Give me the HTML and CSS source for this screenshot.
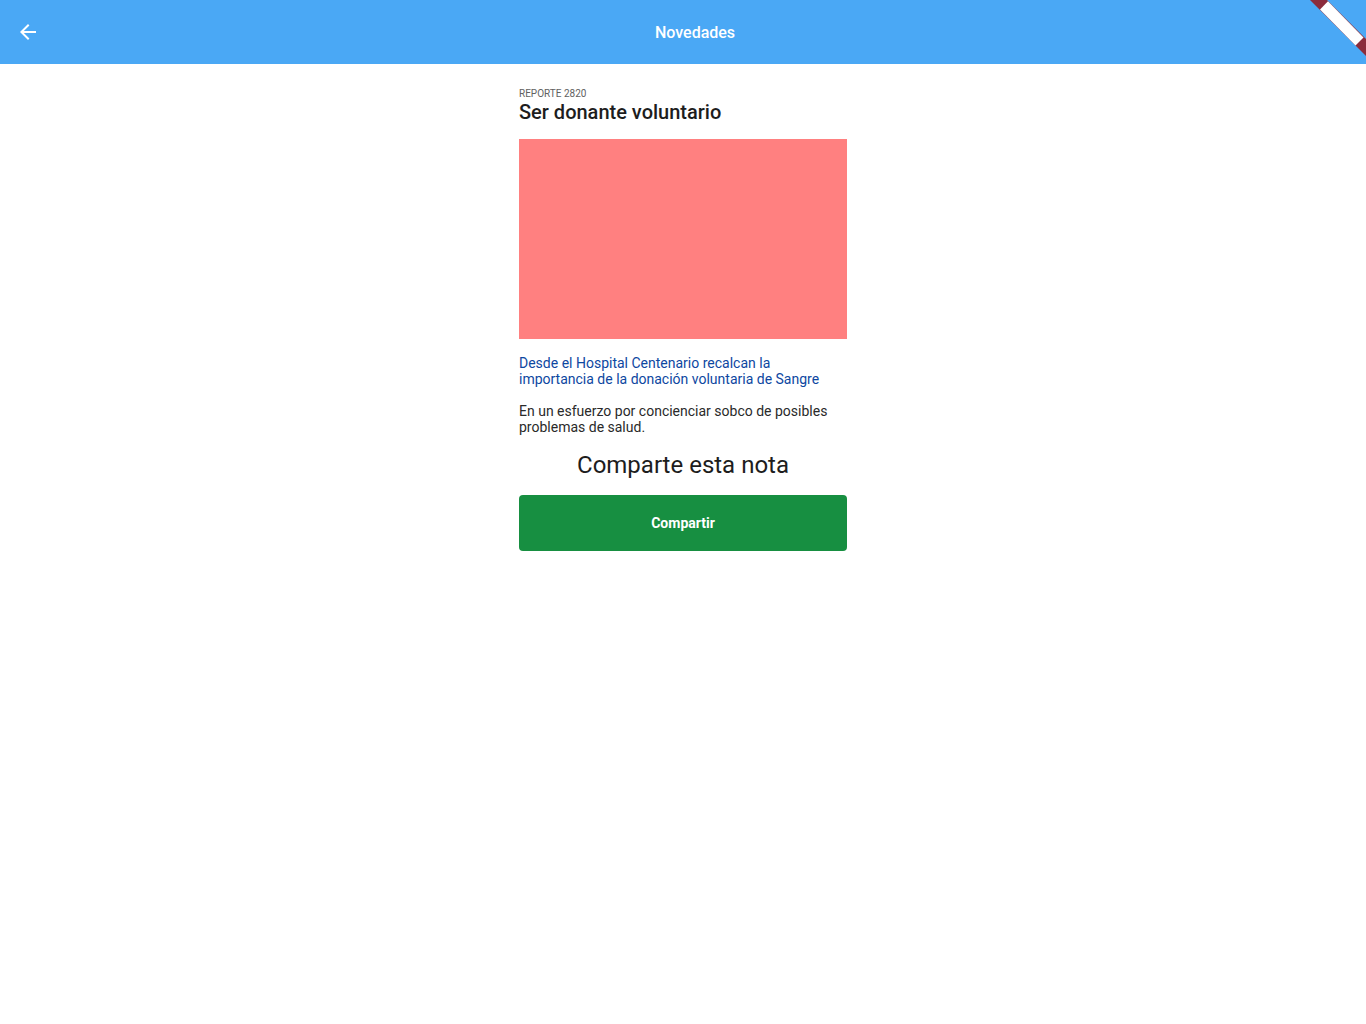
FILE: index.html
```html
<!DOCTYPE html>
<html lang="es">
<head>
<meta charset="utf-8">
<title>Novedades</title>
<link rel="stylesheet" href="styles.css">
</head>
<body>
<header class="appbar">
  <button class="back" aria-label="Atrás">
    <svg width="24" height="24" viewBox="0 0 24 24"><path d="M20 11H7.83l5.59-5.59L12 4l-8 8 8 8 1.41-1.41L7.83 13H20v-2z" fill="#fff"/></svg>
  </button>
  <h1 class="title">Novedades</h1>
  <div class="spacer"></div>
</header>
<svg class="banner" width="66" height="60" viewBox="0 0 66 60">
  <polygon points="10,0 27,0 66,39 66,56" fill="#8b2c3c"/>
  <polygon points="20,9.5 28,1.2 63.5,37.5 55.5,45.5" fill="#ffffff"/>
</svg>
<main class="content">
  <article class="card">
    <div class="kicker">REPORTE 2820</div>
    <h2 class="headline">Ser donante voluntario</h2>
    <div class="image"></div>
    <p class="lead">Desde el Hospital Centenario recalcan la importancia de la donación voluntaria de Sangre</p>
    <p class="body">En un esfuerzo por concienciar sobco de posibles problemas de salud.</p>
    <h3 class="share-title">Comparte esta nota</h3>
    <button class="share-btn">Compartir</button>
  </article>
</main>
</body>
</html>
```

FILE: styles.css
```css
* { box-sizing: border-box; }
html, body {
  margin: 0;
  padding: 0;
  background: #ffffff;
  font-family: Roboto, "Noto Sans", sans-serif;
  color: #212121;
}
.appbar {
  height: 64px;
  background: #4aa8f5;
  display: flex;
  align-items: center;
  padding: 0 0 0 16px;
}
.back {
  width: 24px;
  height: 24px;
  padding: 0;
  border: 0;
  background: none;
  display: flex;
  align-items: center;
  justify-content: center;
}
.title {
  flex: 1;
  margin: 0;
  font-size: 16px;
  font-weight: 500;
  color: #ffffff;
  text-align: center;
}
.spacer { width: 16px; }
.banner {
  position: absolute;
  top: 0;
  right: 0;
}
.content {
  display: flex;
  justify-content: center;
  padding-top: 25px;
}
.card {
  width: 328px;
  display: flex;
  flex-direction: column;
}
.kicker {
  font-size: 10px;
  line-height: 13px;
  color: #616161;
  margin-top: -2px;
}
.headline {
  margin: 0;
  font-size: 20px;
  font-weight: 500;
  line-height: 24px;
  color: #1d1d1d;
}
.image {
  margin-top: 15px;
  height: 200px;
  background: #ff8080;
}
.lead {
  margin: 16px 0 0;
  font-size: 14px;
  line-height: 16px;
  color: #0d47a1;
}
.body {
  margin: 16px 0 0;
  font-size: 14px;
  line-height: 16px;
  color: #2a2a2a;
}
.share-title {
  margin: 16px 0 0;
  font-size: 24px;
  font-weight: 400;
  line-height: 28px;
  text-align: center;
  color: #1d1d1d;
}
.share-btn {
  margin-top: 16px;
  height: 56px;
  border: 0;
  border-radius: 4px;
  background: #178f41;
  color: #ffffff;
  font-family: Roboto, "Noto Sans", sans-serif;
  font-size: 14px;
  font-weight: 700;
}
```
